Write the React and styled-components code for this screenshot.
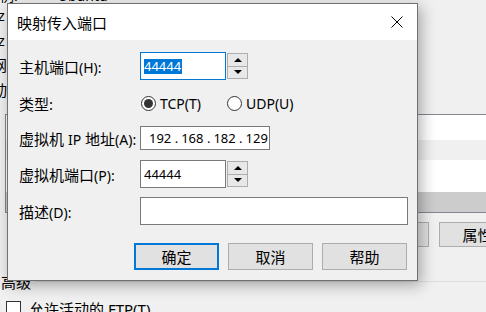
import React from "react";
import styled, { createGlobalStyle } from "styled-components";

const FONT = `"Noto Sans", "Noto Sans CJK SC", sans-serif`;

const GlobalStyle = createGlobalStyle`
  html, body {
    margin: 0;
    padding: 0;
    background: #f0f0f0;
    overflow: hidden;
  }
  body {
    font-family: ${FONT};
    font-size: 15px;
    color: #000;
  }
`;

/* ---------- backdrop (the property page behind the dialog) ---------- */

const Screen = styled.div`
  position: relative;
  width: 486px;
  height: 312px;
  overflow: hidden;
  background: #f0f0f0;
`;

const Backdrop = styled.div`
  display: flex;
  flex-direction: column;
  width: 100%;
  height: 100%;
`;

const TopLine = styled.div`
  display: flex;
  gap: 40px;
  height: 20px;
  margin-top: -14px;
  line-height: 20px;
  font-size: 14px;
  white-space: nowrap;
`;

const Fragments = styled.div`
  display: flex;
  flex-direction: column;
  gap: 6px;
  height: 101px;
  font-size: 15px;
  line-height: 19px;
  white-space: nowrap;
`;

const Fragment = styled.div`
  margin-left: ${(p) => p.$shift}px;
`;

const Rule = styled.div`
  height: 1px;
  margin-top: ${(p) => p.$mt || 0}px;
  margin-left: ${(p) => p.$left || 0}px;
  background: ${(p) => p.$color || "#dcdcdc"};
`;

const ListBox = styled.div`
  display: flex;
  flex-direction: column;
  height: 97px;
  margin-top: 14px;
  margin-left: 5px;
  border-top: 1px solid #828790;
  border-left: 1px solid #828790;
  border-bottom: 1px solid #828790;
  background: #fff;
`;

const ListRow = styled.div`
  height: ${(p) => p.$h}px;
  background: ${(p) => p.$bg};
`;

const BgButtons = styled.div`
  display: flex;
  justify-content: flex-end;
  gap: 10px;
  margin-top: 9px;
  margin-right: -30px;
`;

const BgButton = styled.div`
  display: flex;
  align-items: center;
  justify-content: center;
  width: 75px;
  height: 23px;
  border: 1px solid #adadad;
  background: #e1e1e1;
  font-size: 15px;
`;

const GroupTitle = styled.div`
  display: flex;
  align-items: center;
  gap: 4px;
  margin-top: 9px;
  padding-left: 1px;
  height: 18px;
  font-size: 15px;

  &::after {
    content: "";
    flex: 1;
    height: 1px;
    background: #dcdcdc;
  }
`;

const CheckRow = styled.div`
  display: flex;
  align-items: center;
  gap: 8px;
  margin-top: 8px;
  padding-left: 6px;
  font-size: 15px;
  white-space: nowrap;
`;

const CheckBox = styled.span`
  width: 13px;
  height: 13px;
  border: 1px solid #333;
  background: #fff;
`;

/* ---------- dialog ---------- */

const Dialog = styled.div`
  position: absolute;
  left: 7px;
  top: 3px;
  width: 411px;
  height: 278px;
  box-sizing: border-box;
  display: flex;
  flex-direction: column;
  border: 1px solid #707070;
  background: #f0f0f0;
  box-shadow: 3px 4px 14px rgba(0, 0, 0, 0.32);
`;

const TitleBar = styled.div`
  display: flex;
  align-items: center;
  justify-content: space-between;
  height: 36px;
  padding: 0 14px 0 9px;
  background: #fff;
  font-size: 15px;
`;

const Body = styled.div`
  display: flex;
  flex-direction: column;
  padding: 12px 9px 0 11px;
`;

const Row = styled.div`
  display: flex;
  align-items: center;
  height: ${(p) => p.$h}px;
  margin-bottom: ${(p) => p.$mb}px;
`;

const Label = styled.div`
  width: 121px;
  flex-shrink: 0;
  white-space: nowrap;
  overflow: visible;
`;

const Latin = styled.span`
  font-size: 14px;
`;

const Field = styled.div`
  box-sizing: border-box;
  display: flex;
  align-items: center;
  flex-shrink: 0;
  width: ${(p) => p.$w}px;
  height: 100%;
  padding-left: ${(p) => p.$pl || 3}px;
  border: 1px solid ${(p) => (p.$focus ? "#0078d7" : "#7a7a7a")};
  background: #fff;
  font-size: 13px;
  white-space: nowrap;
`;

const Selected = styled.span`
  background: #0078d7;
  color: #fff;
  line-height: 15px;
  padding-right: 1px;
`;

const Spin = styled.div`
  box-sizing: border-box;
  display: flex;
  flex-direction: column;
  width: 21px;
  height: 26px;
  margin-left: 1px;
  border: 1px solid #adadad;
`;

const SpinButton = styled.div`
  flex: 1;
  display: flex;
  align-items: center;
  justify-content: center;
  background: #e8e8e8;
  & + & {
    border-top: 1px solid #adadad;
  }
`;

const Arrow = styled.span`
  width: 0;
  height: 0;
  border-left: 4px solid transparent;
  border-right: 4px solid transparent;
  ${(p) =>
    p.$down
      ? "border-top: 4px solid #000;"
      : "border-bottom: 4px solid #000;"}
`;

const RadioOption = styled.label`
  display: flex;
  align-items: center;
  gap: 4px;
  width: 85px;
  padding-left: 1px;
  font-size: 14px;
`;

const RadioDot = styled.span`
  box-sizing: border-box;
  display: flex;
  align-items: center;
  justify-content: center;
  width: 15px;
  height: 15px;
  border-radius: 50%;
  border: 1px solid #333;
  background: #fff;

  &::after {
    content: "";
    width: 9px;
    height: 9px;
    border-radius: 50%;
    background: ${(p) => (p.$checked ? "#333" : "transparent")};
  }
`;

const IpPart = styled.span`
  display: inline-block;
  width: ${(p) => p.$w}px;
`;

const Buttons = styled.div`
  display: flex;
  justify-content: flex-end;
  gap: 9px;
  margin-top: 18px;
  padding-right: 1px;
`;

const Button = styled.button`
  box-sizing: border-box;
  width: 85px;
  height: 27px;
  padding: 0;
  font-family: ${FONT};
  font-size: 15px;
  color: #000;
  background: #e1e1e1;
  border: ${(p) => (p.$default ? "2px solid #0078d7" : "1px solid #adadad")};
`;

const SpinBox = ({ value, focus }) => (
  <>
    <Field $w={86} $focus={focus}>
      {focus ? <Selected>{value}</Selected> : value}
    </Field>
    <Spin>
      <SpinButton>
        <Arrow />
      </SpinButton>
      <SpinButton>
        <Arrow $down />
      </SpinButton>
    </Spin>
  </>
);

const CloseIcon = () => (
  <svg width="12" height="12" viewBox="0 0 12 12">
    <path d="M0.5 0.5 L11.5 11.5 M11.5 0.5 L0.5 11.5" stroke="#000" strokeWidth="1" />
  </svg>
);

const IP = ["192", "168", "182", "129"];

export default function App() {
  return (
    <>
      <GlobalStyle />
      <Screen>
        <Backdrop>
          <TopLine>
            <span>例:</span>
            <span>Ubuntu</span>
          </TopLine>
          <Fragments>
            <Fragment $shift={-6}>iz</Fragment>
            <Fragment $shift={-6}>iz</Fragment>
            <Fragment $shift={-8}>网</Fragment>
            <Fragment $shift={-8}>动</Fragment>
          </Fragments>
          <Rule $left={417} />
          <ListBox>
            <ListRow $h={25} $bg="#fff" />
            <ListRow $h={20} $bg="#f0f0f0" />
            <ListRow $h={32} $bg="#fff" />
            <ListRow $h={20} $bg="#cccccc" />
          </ListBox>
          <BgButtons>
            <BgButton>编辑</BgButton>
            <BgButton>属性</BgButton>
          </BgButtons>
          <Rule $mt={16} />
          <GroupTitle>高级</GroupTitle>
          <CheckRow>
            <CheckBox />
            允许活动的 FTP(T)
          </CheckRow>
        </Backdrop>

        <Dialog>
          <TitleBar>
            映射传入端口
            <CloseIcon />
          </TitleBar>
          <Body>
            <Row $h={28} $mb={12}>
              <Label>
                主机端口<Latin>(H):</Latin>
              </Label>
              <SpinBox value="44444" focus />
            </Row>
            <Row $h={22} $mb={12}>
              <Label>类型:</Label>
              <RadioOption>
                <RadioDot $checked />
                TCP(T)
              </RadioOption>
              <RadioOption>
                <RadioDot />
                UDP(U)
              </RadioOption>
            </Row>
            <Row $h={24} $mb={10}>
              <Label>
                虚拟机 <Latin>IP</Latin> 地址<Latin>(A):</Latin>
              </Label>
              <Field $w={130} $pl={8}>
                {IP.map((part, i) => (
                  <IpPart key={part + i} $w={i < 3 ? 33 : 24}>
                    {part}
                    {i < 3 ? " ." : ""}
                  </IpPart>
                ))}
              </Field>
            </Row>
            <Row $h={28} $mb={9}>
              <Label>
                虚拟机端口<Latin>(P):</Latin>
              </Label>
              <SpinBox value="44444" />
            </Row>
            <Row $h={28} $mb={0}>
              <Label>
                描述<Latin>(D):</Latin>
              </Label>
              <Field $w={268} />
            </Row>
            <Buttons>
              <Button $default>确定</Button>
              <Button>取消</Button>
              <Button>帮助</Button>
            </Buttons>
          </Body>
        </Dialog>
      </Screen>
    </>
  );
}
